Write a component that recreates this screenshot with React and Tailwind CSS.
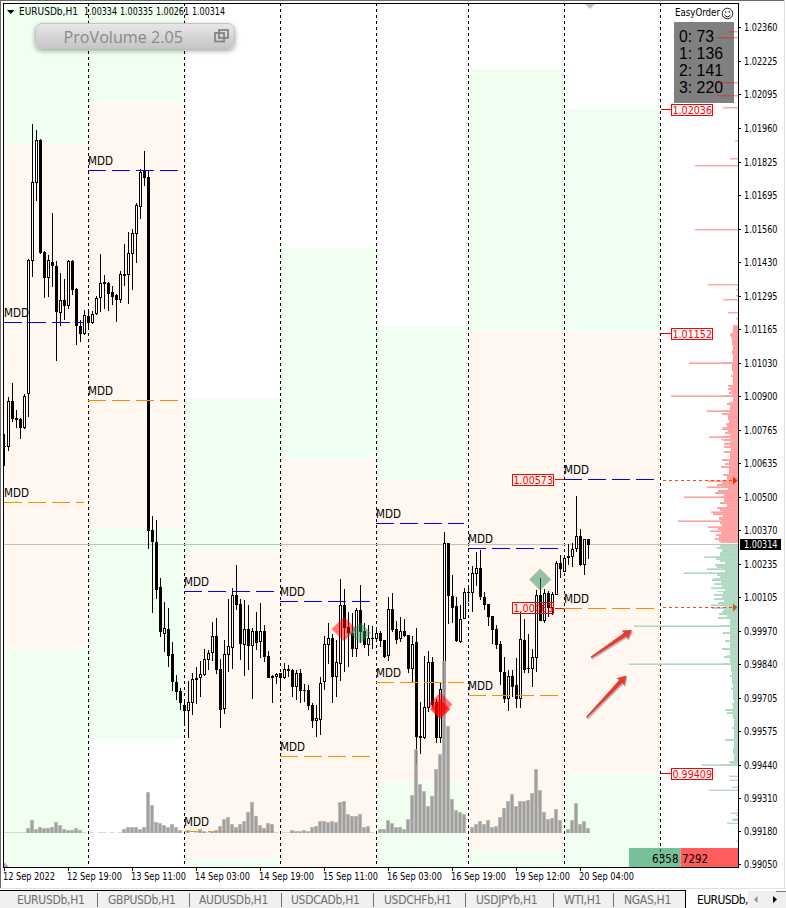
import React from 'react';

const UI_FONT = "[font-family:'DejaVu_Sans_Condensed','DejaVu_Sans',sans-serif]";
const COUNTER_FONT = "[font-family:'Liberation_Sans',Arial,sans-serif]";
const TITLE_FONT = "[font-family:'Open_Sans','Noto_Sans',sans-serif]";

// Session columns: x, width and stacked [top, bottom, color] bands
const GREEN = '#f0fff0';
const PEACH = '#fff7f0';
const ZONES = [
  { x: 4, w: 84, bands: [[4, 143, GREEN], [143, 648, PEACH], [648, 867, GREEN]] },
  { x: 88, w: 96, bands: [[4, 102, GREEN], [102, 528, PEACH], [528, 739, GREEN]] },
  { x: 184, w: 96, bands: [[398, 553, GREEN], [553, 859, PEACH], [859, 867, GREEN]] },
  { x: 280, w: 96, bands: [[248, 460, GREEN], [460, 867, PEACH]] },
  { x: 376, w: 88, bands: [[326, 479, GREEN], [479, 782, PEACH], [782, 867, GREEN]] },
  { x: 468, w: 96, bands: [[69, 331, GREEN], [331, 850, PEACH], [850, 867, GREEN]] },
  { x: 564, w: 96, bands: [[109, 332, GREEN], [332, 773, PEACH], [773, 867, GREEN]] },
];

const SEPARATORS = [88, 184, 280, 376, 468, 564, 660];

// [x1, x2, y, color]
const BLUE = '#0000ff';
const ORANGE = '#ff8c00';
const MDD_LINES = [
  [4, 84, 322, BLUE],
  [4, 84, 502, ORANGE],
  [88, 180, 170, BLUE],
  [88, 180, 400, ORANGE],
  [184, 276, 591, BLUE],
  [184, 276, 831, ORANGE],
  [280, 372, 601, BLUE],
  [280, 372, 756, ORANGE],
  [376, 464, 523, BLUE],
  [376, 464, 682, ORANGE],
  [468, 560, 548, BLUE],
  [468, 560, 695, ORANGE],
  [564, 656, 479, BLUE],
  [564, 656, 608, ORANGE],
];

// Hourly candles, 4px apart: [high, bodyTop, bodyBottom, low, filled]
const CANDLES = [
  [434, 446, 447, 466, 1], [397, 401, 447, 451, 0], [383, 401, 419, 422, 1], [410, 418, 420, 428, 1],
  [418, 419, 428, 439, 1], [394, 396, 428, 429, 0], [259, 260, 394, 417, 0], [124, 182, 261, 277, 0],
  [130, 140, 183, 201, 0], [139, 140, 253, 254, 1], [251, 252, 278, 298, 1], [255, 260, 278, 297, 0],
  [213, 262, 266, 287, 1], [261, 266, 312, 361, 1], [273, 300, 313, 326, 0], [279, 300, 306, 320, 1],
  [260, 261, 306, 309, 0], [260, 261, 290, 295, 1], [288, 289, 326, 345, 1], [320, 326, 334, 342, 1],
  [310, 315, 334, 335, 0], [311, 316, 323, 329, 1], [311, 314, 323, 324, 0], [296, 298, 314, 315, 0],
  [254, 283, 298, 312, 0], [275, 282, 284, 309, 1], [282, 283, 294, 311, 1], [286, 292, 297, 305, 1],
  [294, 295, 300, 322, 1], [271, 274, 300, 303, 0], [244, 274, 276, 286, 1], [232, 253, 275, 304, 0],
  [229, 233, 254, 290, 0], [203, 205, 234, 263, 0], [169, 172, 207, 219, 0], [151, 170, 178, 186, 1],
  [170, 177, 531, 549, 1], [516, 530, 542, 613, 1], [520, 542, 590, 599, 1], [578, 587, 632, 637, 1],
  [602, 628, 634, 652, 0], [608, 629, 656, 667, 1], [642, 654, 682, 691, 1], [675, 682, 692, 700, 1],
  [688, 691, 703, 710, 1], [699, 705, 711, 726, 1], [681, 702, 711, 738, 0], [673, 679, 703, 715, 0],
  [667, 678, 680, 704, 1], [661, 674, 678, 697, 0], [649, 659, 675, 676, 0], [650, 653, 660, 670, 0],
  [622, 636, 653, 661, 0], [618, 636, 670, 674, 1], [659, 669, 710, 728, 1], [640, 654, 709, 714, 0],
  [599, 646, 655, 672, 0], [588, 595, 648, 669, 0], [565, 595, 605, 610, 1], [599, 604, 644, 660, 1],
  [600, 629, 645, 676, 0], [605, 629, 646, 670, 1], [628, 631, 646, 699, 0], [612, 631, 643, 650, 1],
  [603, 631, 642, 658, 0], [625, 631, 657, 662, 1], [651, 656, 678, 678, 1], [675, 676, 678, 703, 1],
  [673, 674, 677, 684, 0], [673, 673, 678, 691, 1], [663, 669, 678, 679, 0], [665, 669, 671, 677, 1],
  [669, 670, 687, 697, 1], [670, 673, 687, 700, 0], [669, 673, 691, 703, 1], [684, 690, 691, 702, 1],
  [685, 690, 706, 710, 1], [703, 705, 721, 728, 1], [705, 718, 721, 737, 0], [677, 683, 720, 735, 0],
  [636, 644, 682, 690, 0], [623, 638, 645, 664, 0], [634, 638, 677, 703, 1], [640, 662, 677, 697, 0],
  [579, 605, 664, 681, 0], [589, 605, 628, 672, 1], [612, 627, 633, 667, 1], [613, 633, 649, 657, 1],
  [608, 610, 649, 657, 0], [585, 610, 632, 643, 1], [623, 631, 645, 648, 1], [625, 638, 645, 656, 0],
  [626, 638, 639, 649, 1], [629, 633, 639, 641, 0], [631, 633, 641, 647, 1], [640, 640, 657, 658, 1],
  [597, 609, 656, 661, 0], [593, 609, 630, 632, 1], [621, 629, 640, 644, 1], [617, 631, 639, 642, 0],
  [619, 631, 636, 637, 1], [635, 635, 669, 673, 1], [636, 644, 669, 683, 0], [628, 642, 737, 764, 1],
  [702, 736, 738, 754, 1], [656, 707, 738, 739, 0], [651, 662, 708, 712, 0], [657, 662, 705, 707, 1],
  [699, 702, 738, 743, 1], [683, 689, 738, 743, 0], [532, 543, 690, 714, 0], [543, 543, 596, 624, 1],
  [575, 596, 608, 623, 1], [597, 606, 641, 642, 1], [605, 619, 642, 643, 0], [588, 592, 619, 619, 0],
  [585, 592, 593, 602, 1], [566, 573, 593, 612, 0], [552, 568, 574, 586, 0], [550, 568, 597, 600, 1],
  [592, 597, 605, 610, 1], [604, 604, 617, 626, 1], [616, 616, 630, 644, 1], [625, 629, 645, 649, 1],
  [641, 644, 672, 685, 1], [657, 672, 699, 703, 1], [670, 676, 699, 711, 0], [670, 676, 687, 697, 1],
  [658, 685, 699, 708, 1], [612, 639, 699, 708, 0], [619, 640, 670, 673, 1], [634, 668, 669, 673, 1],
  [649, 657, 669, 687, 0], [590, 595, 658, 672, 0], [578, 595, 621, 621, 1], [589, 593, 621, 623, 0],
  [591, 593, 608, 617, 1], [592, 594, 608, 615, 0], [561, 563, 595, 595, 0], [555, 563, 569, 578, 1],
  [555, 558, 572, 572, 0], [544, 556, 558, 565, 1], [543, 549, 557, 567, 0], [496, 536, 549, 552, 0],
  [529, 536, 565, 566, 1], [539, 539, 565, 575, 0], [539, 539, 545, 559, 1],
];

// Volume columns: [x, top]
const VOLUME_BASE = 833;
const VOLUMES = [
  [4, 832], [8, 832], [12, 832], [16, 832], [20, 832], [24, 832],
  [28, 828], [32, 820], [36, 829], [40, 827], [44, 828], [48, 828], [52, 827], [56, 822], [60, 825],
  [64, 829], [68, 830], [72, 830], [76, 828], [80, 830], [84, 832], [92, 832], [100, 832], [104, 832],
  [112, 832], [120, 832], [124, 829], [128, 827], [132, 827], [136, 827], [140, 829], [144, 827],
  [148, 792], [152, 805], [156, 822], [160, 823], [164, 825], [168, 827], [172, 824], [176, 827],
  [180, 830], [188, 830], [196, 832], [200, 829], [204, 831], [208, 832], [212, 831], [216, 830],
  [220, 826], [224, 819], [228, 817], [232, 824], [236, 827], [240, 824], [244, 821], [248, 812],
  [252, 802], [256, 816], [260, 825], [264, 828], [268, 823], [272, 824], [276, 832], [284, 832],
  [288, 832], [292, 830], [296, 831], [300, 831], [304, 830], [308, 831], [312, 827], [316, 826],
  [320, 821], [324, 821], [328, 822], [332, 821], [336, 822], [340, 802], [344, 801], [348, 814],
  [352, 816], [356, 816], [360, 814], [364, 827], [368, 826], [372, 832], [380, 829], [384, 829],
  [388, 820], [392, 823], [396, 827], [400, 827], [404, 829], [408, 819], [412, 795], [416, 749],
  [420, 784], [424, 791], [428, 806], [432, 796], [436, 769], [440, 754], [444, 661], [448, 726],
  [452, 799], [456, 810], [460, 812], [464, 814], [472, 827], [476, 824], [480, 821], [484, 824],
  [488, 820], [492, 827], [496, 826], [500, 817], [504, 808], [508, 801], [512, 794], [516, 806],
  [520, 801], [524, 801], [528, 800], [532, 793], [536, 769], [540, 790], [544, 812], [548, 819],
  [552, 818], [556, 809], [560, 820], [568, 829], [572, 820], [576, 803], [580, 824], [584, 821],
  [588, 828],
];

// Market profile, steps of [y, left edge]; each step lasts until the next one
const PROFILE_RIGHT = 738;
const SELL_STEPS = [
  [325, 733], [333, 731], [334, 730], [336, 731], [338, 732], [345, 733], [350, 732], [354, 733],
  [362, 689], [364, 732], [371, 733], [375, 731], [377, 733], [385, 728], [387, 730], [388, 728],
  [390, 731], [392, 729], [394, 732], [395, 671], [397, 733], [402, 729], [403, 727], [405, 730],
  [410, 707], [412, 729], [413, 722], [415, 728], [420, 729], [423, 726], [425, 727], [427, 723],
  [428, 722], [430, 728], [432, 725], [434, 730], [436, 709], [438, 730], [439, 721], [440, 723],
  [441, 730], [443, 724], [445, 730], [446, 724], [448, 731], [451, 724], [453, 730], [459, 722],
  [461, 729], [463, 725], [465, 729], [466, 721], [468, 729], [474, 723], [476, 727], [480, 708],
  [482, 722], [484, 717], [486, 707], [488, 728], [490, 718], [492, 715], [494, 724], [496, 684],
  [498, 724], [502, 720], [504, 727], [507, 717], [509, 720], [511, 711], [513, 713], [515, 723],
  [517, 719], [520, 678], [522, 720], [524, 722], [526, 708], [528, 718], [530, 710], [532, 721],
  [534, 716], [536, 719], [538, 715], [540, 719], [542, 721], [543, 738],
];
const BUY_STEPS = [
  [545, 720], [547, 717], [549, 722], [552, 720], [556, 704], [558, 716], [560, 720], [562, 725],
  [564, 715], [566, 717], [568, 707], [570, 725], [572, 684], [574, 717], [576, 720], [578, 714],
  [579, 712], [581, 721], [583, 714], [585, 722], [587, 711], [589, 725], [591, 717], [592, 723],
  [594, 714], [596, 722], [598, 714], [600, 724], [602, 718], [604, 711], [606, 725], [607, 712],
  [609, 724], [611, 722], [613, 719], [615, 727], [617, 718], [619, 730], [625, 634], [627, 730],
  [632, 723], [634, 730], [640, 725], [642, 730], [648, 722], [650, 730], [655, 727], [656, 724],
  [658, 730], [663, 629], [665, 731], [672, 732], [675, 730], [677, 732], [684, 733], [688, 731],
  [690, 733], [700, 734], [703, 732], [705, 733], [709, 725], [711, 732], [712, 727], [714, 733],
  [719, 734], [727, 732], [729, 734], [739, 725], [741, 734], [748, 733], [754, 734], [761, 729],
  [763, 731], [764, 702], [766, 738],
];
const SELL_TICKS = [
  [31, 729], [37, 717], [82, 717], [95, 717], [107, 723], [140, 735], [158, 730], [165, 695],
  [229, 695], [284, 708], [289, 736], [295, 736], [299, 723], [312, 728], [318, 736],
];
const BUY_TICKS = [
  [776, 729], [780, 730], [787, 732], [790, 709], [810, 737], [813, 731], [815, 736], [819, 733],
  [820, 732], [823, 727], [841, 736],
];

const PRICES = [
  '1.02360', '1.02225', '1.02095', '1.01960', '1.01825', '1.01695', '1.01560', '1.01430', '1.01295',
  '1.01165', '1.01030', '1.00900', '1.00765', '1.00635', '1.00500', '1.00370', '1.00235', '1.00105',
  '0.99970', '0.99840', '0.99705', '0.99575', '0.99440', '0.99310', '0.99180', '0.99050',
];

const TIMES = [
  '12 Sep 2022', '12 Sep 19:00', '13 Sep 11:00', '14 Sep 03:00', '14 Sep 19:00', '15 Sep 11:00',
  '16 Sep 03:00', '16 Sep 19:00', '19 Sep 12:00', '20 Sep 04:00',
];

const TABS = [
  { name: 'EURUSDb,H1', cls: 'w-[97px] pl-[17px]' },
  { name: 'GBPUSDb,H1', cls: 'w-[92px] pl-[11px]' },
  { name: 'AUDUSDb,H1', cls: 'w-[92px] pl-[10px]' },
  { name: 'USDCADb,H1', cls: 'w-[92px] pl-[10px]' },
  { name: 'USDCHFb,H1', cls: 'w-[92px] pl-[11px]' },
  { name: 'USDJPYb,H1', cls: 'w-[88px] pl-[11px]' },
  { name: 'WTI,H1', cls: 'w-[60px] pl-[11px]' },
  { name: 'NGAS,H1', cls: 'w-[72px] pl-[11px]' },
];

const priceY = (price) => Math.round(27 + (1.0236 - Number(price)) * 25287);

function Label({ x, y, w, size, fill = '#000', font = UI_FONT, children }) {
  return (
    <text
      x={x}
      y={y}
      fontSize={size}
      fill={fill}
      textLength={w}
      lengthAdjust="spacingAndGlyphs"
      className={font}
    >
      {children}
    </text>
  );
}

function Candle({ x, data }) {
  const [high, top, bottom, low, filled] = data;
  const h = Math.max(bottom - top, 1);
  return (
    <g>
      <rect x={x} y={high} width="1" height={Math.max(low - high, 1)} fill="#000" />
      <rect x={x - 1} y={top} width="3" height={h} fill="#000" />
      {!filled && h > 2 && <rect x={x} y={top + 1} width="1" height={h - 2} fill="#fff" />}
    </g>
  );
}

function ProfileSteps({ steps, fill, light, stripe }) {
  return steps.slice(0, -1).map(([y, left], i) => {
    const h = steps[i + 1][0] - y;
    return (
      <g key={y}>
        <rect x={left} y={y} width={PROFILE_RIGHT - left} height={h} fill={fill} />
        <rect x={left} y={y} width={PROFILE_RIGHT - left} height="1" fill={stripe} />
        {left < 712 && <rect x={left} y={y} width={722 - left} height="1" fill={light} />}
      </g>
    );
  });
}

function Diamond({ cx, cy, r, fill, opacity }) {
  const points = `${cx},${cy - r} ${cx + r},${cy} ${cx},${cy + r} ${cx - r},${cy}`;
  return <polygon points={points} fill={fill} opacity={opacity} />;
}

function PointerArrow({ x1, y1, x2, y2 }) {
  const len = Math.hypot(x2 - x1, y2 - y1);
  const angle = (Math.atan2(y2 - y1, x2 - x1) * 180) / Math.PI;
  const points = `0,-0.8 ${len - 8},-2.2 ${len - 9},-5.5 ${len},0 ${len - 9},5.5 ${len - 8},2.2 0,0.8`;
  return (
    <>
      <polygon
        points={points}
        fill="#000"
        opacity="0.25"
        transform={`translate(${x1 + 1} ${y1 + 1.5}) rotate(${angle})`}
      />
      <polygon points={points} fill="#e53c32" transform={`translate(${x1} ${y1}) rotate(${angle})`} />
    </>
  );
}

function PriceTag({ x, y, children }) {
  return (
    <g>
      <rect x={x + 0.5} y={y + 0.5} width="41" height="11" fill="none" stroke="#f00" />
      <Label x={x + 1.5} y={y + 10} w={39.5} size={11} fill="#f00">
        {children}
      </Label>
    </g>
  );
}

function Plot() {
  return (
    <svg width="739" height="868" viewBox="0 0 739 868" className="block shrink-0">
      <g shapeRendering="crispEdges">
        {ZONES.map((zone) =>
          zone.bands.map(([top, bottom, color]) => (
            <rect key={`${zone.x}-${top}`} x={zone.x} y={top} width={zone.w} height={bottom - top} fill={color} />
          )),
        )}
        {SEPARATORS.map((x) => (
          <line key={x} x1={x + 0.5} x2={x + 0.5} y1="3" y2="866" stroke="#000" strokeDasharray="3 3" />
        ))}
        <rect x="4" y="544" width="734" height="1" fill="#c0c0c0" />
        {CANDLES.map((c, i) => (
          <Candle key={i} x={4 + i * 4} data={c} />
        ))}
        {MDD_LINES.map(([x1, x2, y, color]) => (
          <line key={y} x1={x1} x2={x2} y1={y + 0.5} y2={y + 0.5} stroke={color} strokeDasharray="18 6" />
        ))}
        {VOLUMES.map(([x, top]) => (
          <g key={x} opacity={top > 831 ? 0.5 : 0.88}>
            <rect x={x - 2} y={top} width="4" height={VOLUME_BASE - top} fill="#b4b4b2" />
            <rect x={x - 1} y={top + 1} width="2" height={Math.max(VOLUME_BASE - top - 1, 0)} fill="#959593" />
          </g>
        ))}
      </g>

      {MDD_LINES.map(([x, , y]) => (
        <Label key={y} x={x} y={y - 5} w={25} size={12}>
          MDD
        </Label>
      ))}

      <Diamond cx={344} cy={629} r={12.3} fill="#f00" opacity={0.52} />
      <Diamond cx={360.3} cy={633} r={10.8} fill="#2e8b57" opacity={0.5} />
      <Diamond cx={440.4} cy={704.5} r={12} fill="#f00" opacity={0.52} />
      <Diamond cx={440.2} cy={709.3} r={10} fill="#f00" opacity={0.7} />
      <Diamond cx={540.2} cy={579.5} r={11} fill="#2e8b57" opacity={0.5} />

      {/* order book profile */}
      <g shapeRendering="crispEdges">
        <ProfileSteps steps={SELL_STEPS} fill="#ff9f9f" light="#ffc4c4" stripe="#ffa6a6" />
        <ProfileSteps steps={BUY_STEPS} fill="#afd8c3" light="#cbe6d8" stripe="#b6dcc8" />
      </g>

      <g shapeRendering="crispEdges" fill="#f00">
        <rect x="661" y="109" width="10" height="1" />
        <rect x="661" y="333" width="10" height="1" />
        <rect x="661" y="773" width="10" height="1" />
        <rect x="555" y="479" width="9" height="1" />
        <rect x="555" y="608" width="9" height="1" />
      </g>
      <PriceTag x={671} y={104}>1.02036</PriceTag>
      <PriceTag x={671} y={328}>1.01152</PriceTag>
      <PriceTag x={671} y={768}>0.99409</PriceTag>
      <PriceTag x={512} y={474}>1.00573</PriceTag>
      <PriceTag x={512} y={602}>1.00063</PriceTag>

      <g stroke="#ff4500" strokeDasharray="3 3" shapeRendering="crispEdges">
        <line x1="663" x2="733" y1="480.5" y2="480.5" />
        <line x1="663" x2="733" y1="607.5" y2="607.5" />
      </g>
      <path d="M733 476.5 L737.5 480.5 L733 484.5 Z" fill="#ff2a00" />
      <path d="M733 603.5 L737.5 607.5 L733 611.5 Z" fill="#b5622c" />

      <PointerArrow x1={591} y1={657.5} x2={632} y2={630} />
      <PointerArrow x1={586.5} y1={717.5} x2={626.5} y2={675.5} />

      {/* shift and scroll markers */}
      <path d="M585 4 H595 L590 9 Z" fill="#c0c0c0" />
      <path d="M4 862 L9 867 H4 Z" fill="#a9a9a9" />

      {/* symbol header */}
      <path d="M7 10 H14.5 L10.7 14 Z" fill="#000" />
      <Label x={19} y={15} w={59} size={10}>EURUSDb,H1</Label>
      <Label x={84} y={15} w={33} size={10}>1.00334</Label>
      <Label x={120} y={15} w={33} size={10}>1.00335</Label>
      <Label x={156} y={15} w={33} size={10}>1.00261</Label>
      <Label x={192} y={15} w={33} size={10}>1.00314</Label>
      <Label x={675} y={16} w={45} size={10}>EasyOrder</Label>
      <g fill="none" stroke="#000" strokeWidth="0.9">
        <circle cx="727.5" cy="13.5" r="5.3" />
        <path d="M724.5 15 Q727.5 18.5 730.5 15" />
      </g>
      <circle cx="725.6" cy="12" r="0.8" />
      <circle cx="729.4" cy="12" r="0.8" />

      {/* spread counters */}
      <rect x="674" y="22" width="60" height="81" fill="#808080" />
      <Label x={679} y={42} w={35} size={17} font={COUNTER_FONT}>0: 73</Label>
      <Label x={679} y={59} w={44} size={17} font={COUNTER_FONT}>1: 136</Label>
      <Label x={679} y={76} w={44} size={17} font={COUNTER_FONT}>2: 141</Label>
      <Label x={679} y={93} w={44} size={17} font={COUNTER_FONT}>3: 220</Label>

      <g shapeRendering="crispEdges">
        {SELL_TICKS.map(([y, left]) => (
          <g key={y} fill="#f00">
            <rect x={left} y={y} width={PROFILE_RIGHT - left} height="1" opacity="0.36" />
            <rect x={left} y={y + 1} width={PROFILE_RIGHT - left} height="1" opacity="0.16" />
          </g>
        ))}
        {BUY_TICKS.map(([y, left]) => (
          <g key={y} fill="#2e8b57">
            <rect x={left} y={y} width={PROFILE_RIGHT - left} height="1" opacity="0.34" />
            <rect x={left} y={y - 1} width={PROFILE_RIGHT - left} height="1" opacity="0.14" />
          </g>
        ))}
      </g>

      {/* buy / sell totals */}
      <rect x="629" y="848" width="51.5" height="19" fill="#78c098" />
      <rect x="680.5" y="848" width="57.5" height="19" fill="#ff5c5c" />
      <line x1="660.5" x2="660.5" y1="849" y2="866" stroke="#1d4a30" strokeDasharray="3 3" />
      <Label x={652} y={863} w={26.5} size={12}>6358</Label>
      <Label x={682} y={863} w={26} size={12}>7292</Label>

      {/* plot frame */}
      <g shapeRendering="crispEdges" fill="#000">
        <rect x="3" y="3" width="736" height="1" />
        <rect x="3" y="3" width="1" height="865" />
        <rect x="738" y="3" width="1" height="865" />
        <rect x="3" y="867" width="736" height="1" />
      </g>
    </svg>
  );
}

function PriceAxis() {
  return (
    <svg width="45" height="868" viewBox="739 0 45 868" className="block shrink-0 overflow-visible">
      {PRICES.map((price) => {
        const y = priceY(price);
        return (
          <g key={price}>
            <rect x="739" y={y} width="2" height="1" />
            <Label x={744} y={y + 4} w={33.5} size={10}>
              {price}
            </Label>
          </g>
        );
      })}
      <rect x="740" y="539" width="41" height="11" />
      <Label x={744} y={548} w={33.5} size={10} fill="#fff">
        1.00314
      </Label>
    </svg>
  );
}

function TimeAxis() {
  return (
    <svg width="739" height="20" viewBox="0 868 739 20" className="block">
      {TIMES.map((time, i) => (
        <g key={time}>
          <rect x={4 + i * 64} y="868" width="1" height="3" />
          <Label x={3 + i * 64} y={880} w={i === 0 ? 52 : 55} size={10}>
            {time}
          </Label>
        </g>
      ))}
    </svg>
  );
}

function ProVolumeButton() {
  return (
    <button
      type="button"
      className="absolute top-[23px] left-[35px] flex h-[26px] w-[200px] items-center justify-between rounded-[7px] border border-[#c4c4c4] bg-linear-to-b from-[#e9e6e9] to-[#c6c6c6] pr-[5px] pl-[27px] shadow-[0_2px_5px_rgba(0,0,0,0.35)]"
    >
      <svg width="121" height="24" className="block overflow-visible">
        <Label x={0.5} y={19} w={119.5} size={17} fill="#8b898b" font={TITLE_FONT}>
          ProVolume 2.05
        </Label>
      </svg>
      <svg width="15" height="14" viewBox="0 0 15 14" fill="none" stroke="#858385" strokeWidth="1.8">
        <rect x="5" y="1" width="9" height="8" />
        <rect x="1" y="4" width="9" height="8.5" />
      </svg>
    </button>
  );
}

function TabBar() {
  return (
    <nav className={`flex h-[18px] bg-[#f0f0f0] text-[12px] leading-none tracking-[-0.3px] text-[#6e6e6e] ${UI_FONT}`}>
      {TABS.map((tab, i) => (
        <div key={tab.name} className={`relative h-full shrink-0 border-t border-black pt-[3px] whitespace-nowrap ${tab.cls}`}>
          {tab.name}
          {i < TABS.length - 1 && <span className="absolute top-[2px] right-[-1px] h-[14px] w-px bg-[#707070]" />}
        </div>
      ))}
      <div className="h-full w-[63px] shrink-0 overflow-hidden border-l border-black bg-white pt-[4px] pl-[11px] tracking-[-0.6px] whitespace-nowrap text-black">
        EURUSDb,H1
      </div>
      <div className="flex h-full flex-1 items-center justify-center border-t border-white">
        <svg width="38" height="17" viewBox="0 0 38 17">
          <rect x="28" y="-1" width="10" height="1.5" fill="#000" />
          <path d="M9.5 5 V12 L6 8.5 Z" fill="#909090" />
          <path d="M25 5 V12 L29 8.5 Z" fill="#000" />
        </svg>
      </div>
    </nav>
  );
}

export default function App() {
  return (
    <div className="flex h-[908px] w-[786px] flex-col overflow-hidden bg-white">
      <main className="relative flex h-[889px] flex-col border-b border-[#e0e0e0]">
        <div className="flex">
          <Plot />
          <PriceAxis />
        </div>
        <TimeAxis />
        <div className="absolute top-0 left-0 h-px w-[784px] bg-[#6b6b6b]" />
        <div className="absolute top-0 left-0 h-full w-px bg-[#6b6b6b]" />
        <div className="absolute top-0 right-[1px] h-full w-px bg-[#e0e0e0]" />
        <ProVolumeButton />
      </main>
      <div className="h-px bg-white" />
      <TabBar />
    </div>
  );
}
